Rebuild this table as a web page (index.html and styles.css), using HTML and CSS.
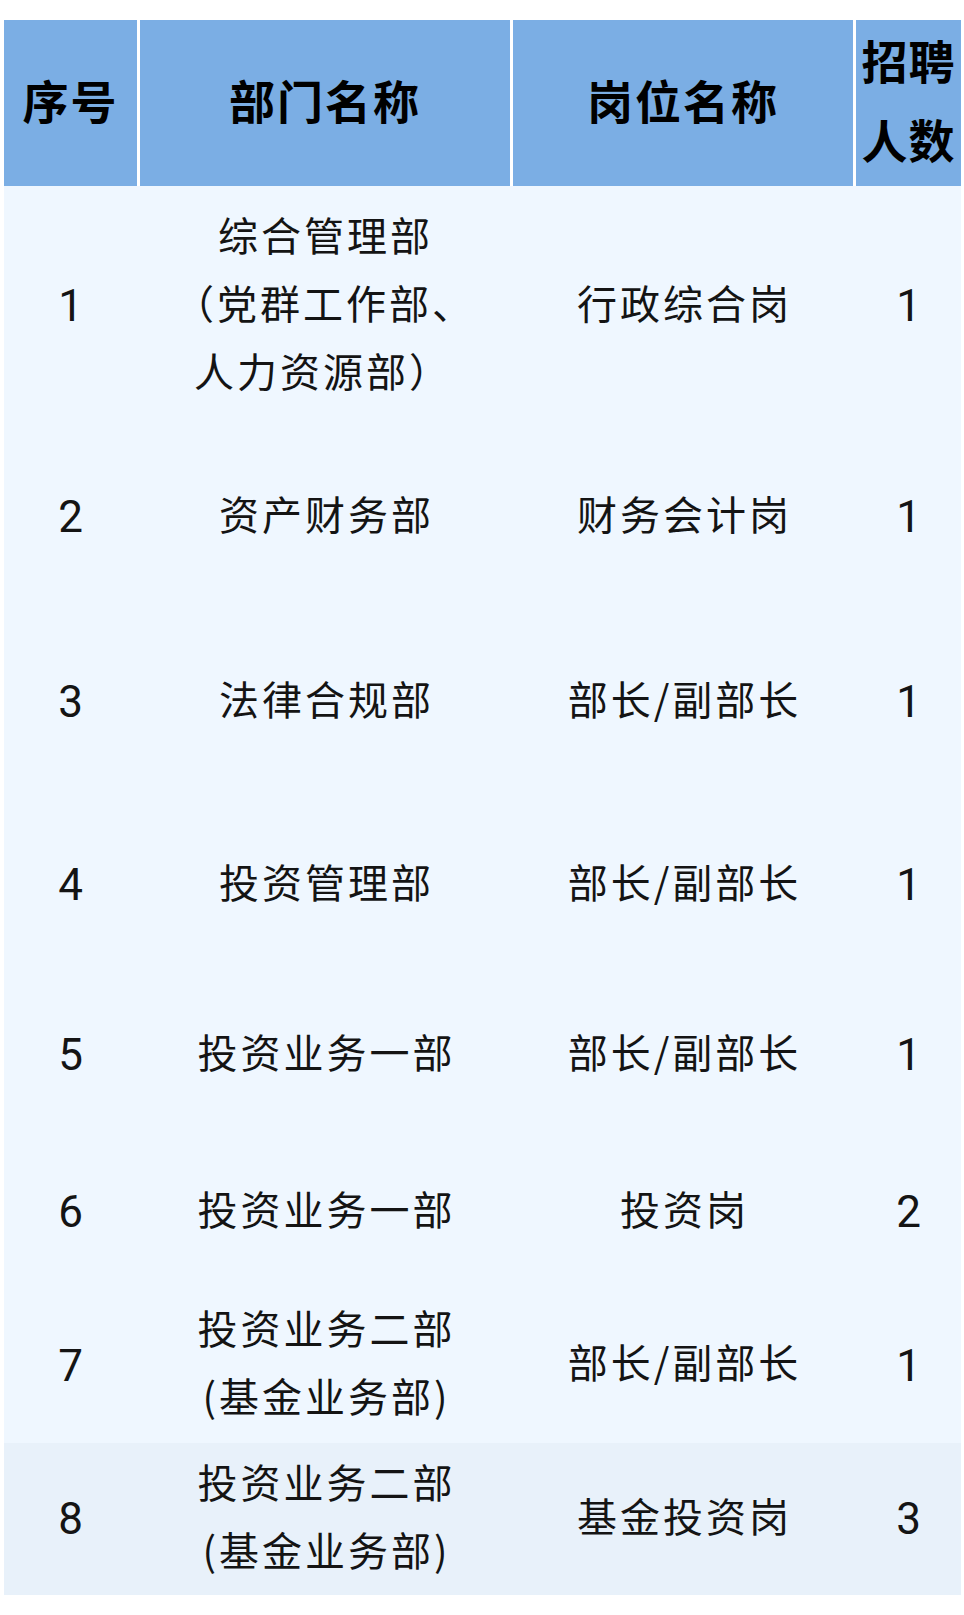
FILE: index.html
```html
<!DOCTYPE html>
<html lang="zh-CN">
<head>
<meta charset="utf-8">
<title>招聘岗位</title>
<link rel="stylesheet" href="styles.css">
</head>
<body>
<div class="table">
  <div class="row head">
    <div class="cell"><div class="in">序号</div></div>
    <div class="cell"><div class="in">部门名称</div></div>
    <div class="cell"><div class="in">岗位名称</div></div>
    <div class="cell two"><div class="in">招聘<br>人数</div></div>
  </div>
  <div class="row r1">
    <div class="cell num">1</div>
    <div class="cell txt"><div class="in left"><span class="indent">综合管理部</span><br><span class="half">（</span>党群工作部、<br>人力资源部<span class="half">）</span></div></div>
    <div class="cell txt"><div class="in">行政综合岗</div></div>
    <div class="cell num">1</div>
  </div>
  <div class="row r2">
    <div class="cell num">2</div>
    <div class="cell txt"><div class="in">资产财务部</div></div>
    <div class="cell txt"><div class="in">财务会计岗</div></div>
    <div class="cell num">1</div>
  </div>
  <div class="row r3">
    <div class="cell num">3</div>
    <div class="cell txt"><div class="in">法律合规部</div></div>
    <div class="cell txt"><div class="in">部长/副部长</div></div>
    <div class="cell num">1</div>
  </div>
  <div class="row r4">
    <div class="cell num">4</div>
    <div class="cell txt"><div class="in">投资管理部</div></div>
    <div class="cell txt"><div class="in">部长/副部长</div></div>
    <div class="cell num">1</div>
  </div>
  <div class="row r5">
    <div class="cell num">5</div>
    <div class="cell txt"><div class="in">投资业务一部</div></div>
    <div class="cell txt"><div class="in">部长/副部长</div></div>
    <div class="cell num">1</div>
  </div>
  <div class="row r6">
    <div class="cell num">6</div>
    <div class="cell txt"><div class="in">投资业务一部</div></div>
    <div class="cell txt"><div class="in">投资岗</div></div>
    <div class="cell num">2</div>
  </div>
  <div class="row r7">
    <div class="cell num">7</div>
    <div class="cell txt"><div class="in">投资业务二部<br>(基金业务部)</div></div>
    <div class="cell txt"><div class="in">部长/副部长</div></div>
    <div class="cell num">1</div>
  </div>
  <div class="row r8 alt">
    <div class="cell num">8</div>
    <div class="cell txt"><div class="in">投资业务二部<br>(基金业务部)</div></div>
    <div class="cell txt"><div class="in">基金投资岗</div></div>
    <div class="cell num">3</div>
  </div>
</div>
</body>
</html>
```

FILE: styles.css
```css
html, body {
  margin: 0;
  padding: 0;
  background: #ffffff;
}

body {
  font-family: "Noto Sans CJK SC", "Noto Sans", sans-serif;
  color: #141414;
}

.table {
  width: 957px;
  margin: 20px 0 0 4px;
  display: flex;
  flex-direction: column;
}

.row {
  display: grid;
  grid-template-columns: 133px 370px 340px 105px;
  column-gap: 3px;
  background: #eff7ff;
}

.row.head {
  background: #ffffff;
  height: 166px;
}

.row.head .cell {
  background: #7baee4;
  font-weight: 700;
  font-size: 46px;
  letter-spacing: 2px;
  color: #000000;
  line-height: 79px;
  padding-bottom: 11px;
  box-sizing: border-box;
}

.row.head .cell.two {
  letter-spacing: 1px;
}

.cell {
  display: flex;
  align-items: center;
  justify-content: center;
  text-align: center;
}

.in {
  white-space: nowrap;
}

.in.left {
  text-align: left;
  padding-left: 16px;
}

.indent {
  padding-left: 24px;
}

.txt {
  font-size: 40px;
  letter-spacing: 3px;
  line-height: 68px;
  padding-left: 3px;
  padding-bottom: 9px;
  box-sizing: border-box;
}

.num {
  font-family: Roboto, "Liberation Sans", sans-serif;
  font-size: 44px;
}

.half {
  font-feature-settings: "halt";
}

.r1 { height: 240px; }
.r2 { height: 182px; }
.r3 { height: 188px; }
.r4 { height: 178px; }
.r5 { height: 162px; }
.r6 { height: 152px; }
.r7 { height: 155px; }
.r8 { height: 152px; }

.row.alt {
  background: #e8f1fa;
}
```
